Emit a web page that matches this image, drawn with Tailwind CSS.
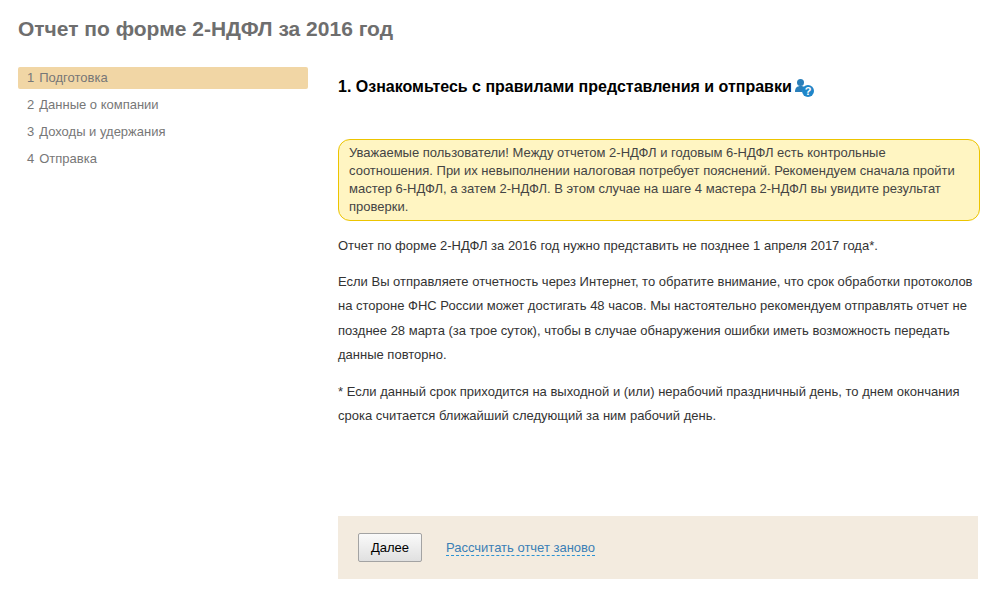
<!DOCTYPE html>
<html lang="ru">

<head>
    <meta charset="UTF-8">
    <meta name="viewport" content="width=device-width, initial-scale=1.0">
    <title>Отчет 2-НДФЛ</title>
    <script src="https://cdn.jsdelivr.net/npm/@tailwindcss/browser@4"></script>
</head>

<body class="bg-white font-['Liberation_Sans',Arial,sans-serif] text-[13px] text-[#333] h-[594px] overflow-hidden">
    <h1 class="pl-[18px] pt-[17px] h-[67px] text-[21px] leading-[24px] font-bold text-[#6e6e6e]">Отчет по форме 2-НДФЛ за 2016 год</h1>

    <div class="flex pl-[18px]">
        <ul class="w-[290px] shrink-0 text-[#777] flex flex-col gap-[5px]">
            <li class="h-[22px] leading-[21px] pl-[9px] bg-[#f1d6a5] rounded-[2px]"><span class="mr-[5px]">1</span>Подготовка</li>
            <li class="h-[22px] leading-[21px] pl-[9px]"><span class="mr-[5px]">2</span>Данные о компании</li>
            <li class="h-[22px] leading-[21px] pl-[9px]"><span class="mr-[5px]">3</span>Доходы и удержания</li>
            <li class="h-[22px] leading-[21px] pl-[9px]"><span class="mr-[5px]">4</span>Отправка</li>
        </ul>

        <main class="ml-[30px] w-[642px]">
            <h2 class="flex items-center h-[40px] text-[16px] leading-[40px] font-bold text-black">
                1. Ознакомьтесь с правилами представления и отправки
                <svg class="ml-[3px] mt-[2px]" width="20" height="18" viewBox="0 0 20 18">
                    <circle cx="5.500" cy="3.500" r="3.500" fill="#2a7fba" />
                    <path d="M0 13c0-4 2-6 5.500-6 2 0 3.500 .5 4.500 1.500-1.500 1-2.500 2.500-2.500 4.500z" fill="#2a7fba" />
                    <circle cx="13" cy="12" r="6" fill="#1f86c9" />
                    <text x="13" y="16" text-anchor="middle" font-size="11" font-weight="700" fill="#fff">?</text>
                </svg>
            </h2>

            <div class="mt-[32px] h-[82px] px-[10px] py-[4px] bg-[#fff5c2] border border-[#ecc400] rounded-[12px] leading-[18px] text-[#444]">
                Уважаемые пользователи! Между отчетом 2-НДФЛ и годовым 6-НДФЛ есть контрольные соотношения. При их невыполнении налоговая потребует пояснений. Рекомендуем сначала пройти мастер 6-НДФЛ, а затем 2-НДФЛ. В этом случае на шаге 4 мастера 2-НДФЛ вы увидите результат проверки.
            </div>

            <p class="mt-[13px] leading-[24.375px]">Отчет по форме 2-НДФЛ за 2016 год нужно представить не позднее 1 апреля 2017 года*.</p>
            <p class="mt-[11.700px] leading-[24.375px]">Если Вы отправляете отчетность через Интернет, то обратите внимание, что срок обработки протоколов на стороне ФНС России может достигать 48 часов. Мы настоятельно рекомендуем отправлять отчет не позднее 28 марта (за трое суток), чтобы в случае обнаружения ошибки иметь возможность передать данные повторно.</p>
            <p class="mt-[12.300px] leading-[24.375px]">* Если данный срок приходится на выходной и (или) нерабочий праздничный день, то днем окончания срока считается ближайший следующий за ним рабочий день.</p>

            <div class="mt-[87px] w-[640px] h-[63px] bg-[#f3ebdf] flex items-center pl-[20px]">
                <button class="w-[64px] h-[29px] border border-[#a3a3a3] rounded-[2px] bg-gradient-to-b from-[#fafafa] to-[#e0e0e0] text-[13px] text-black pt-[1px]">Далее</button>
                <a href="#" class="ml-[24px] mt-[1px] text-[13px] leading-[15px] text-[#3b7fb5] border-b border-dashed border-[#2a93d5]">Рассчитать отчет заново</a>
            </div>
        </main>
    </div>
</body>

</html>
